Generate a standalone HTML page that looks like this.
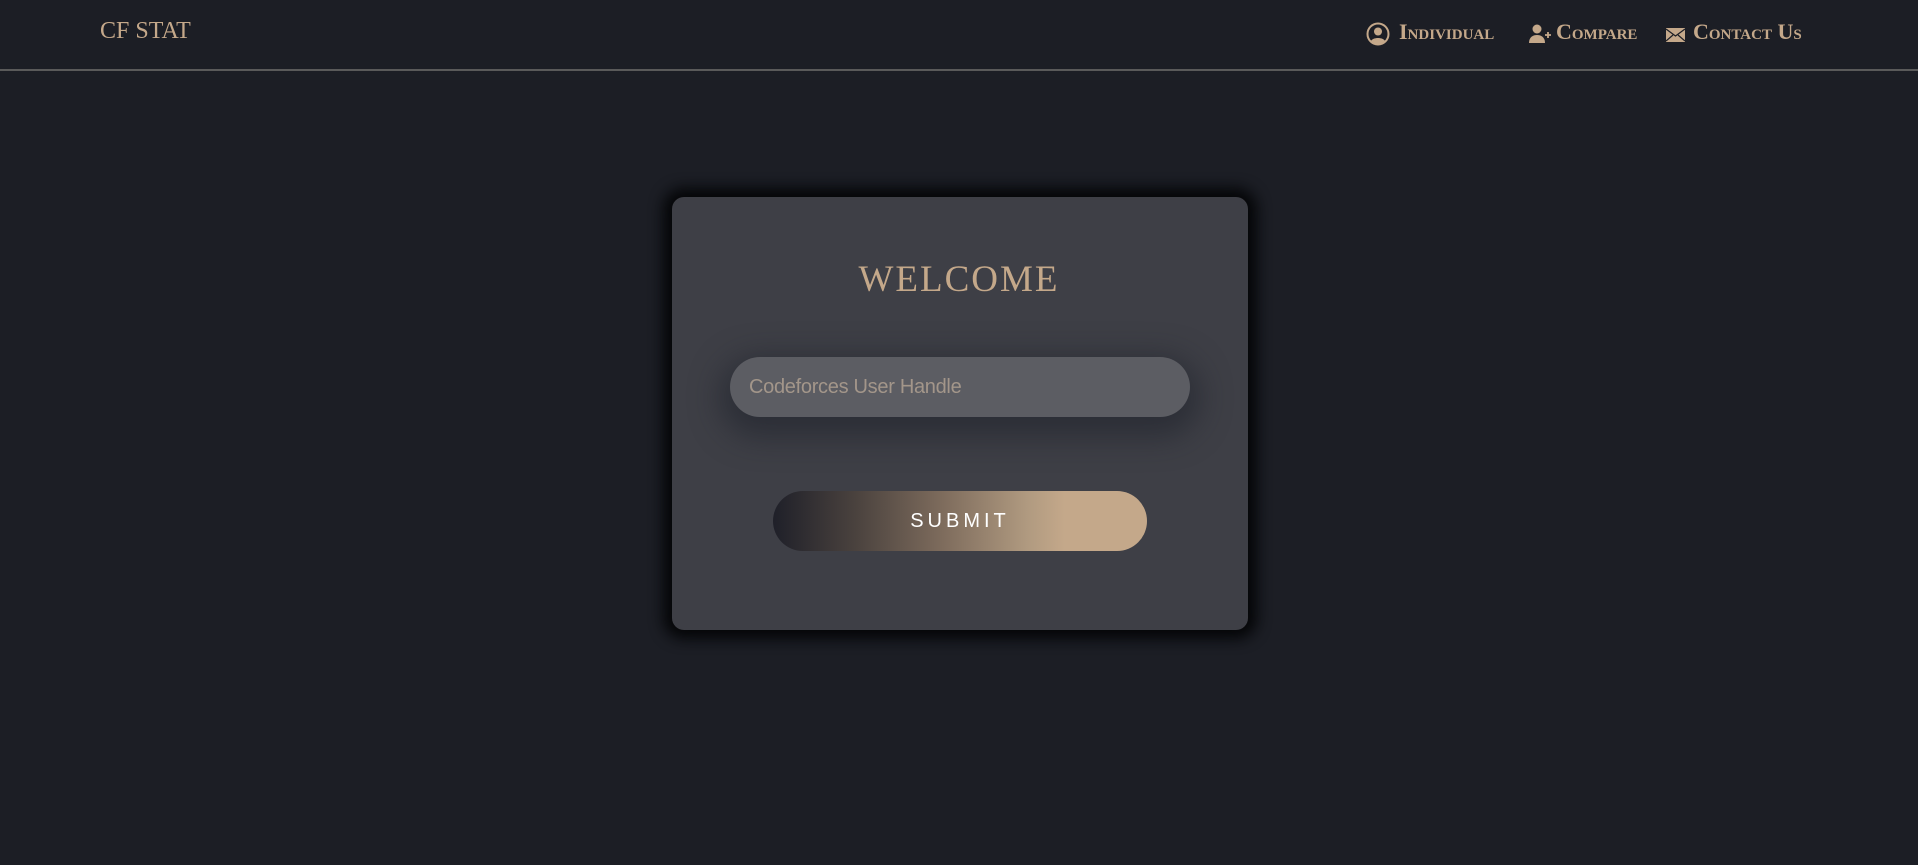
<!DOCTYPE html>
<html><head><style>
html,body{margin:0;padding:0;width:1918px;height:865px;background:#1c1e25;overflow:hidden;font-family:"Liberation Serif",serif}
.nav{position:absolute;left:0;top:0;width:1918px;height:69px;border-bottom:2px solid #5a5a5a}
.logo{position:absolute;left:100px;top:18px;font-size:24px;color:#c4a88a;letter-spacing:0px}
.item{position:absolute;top:19px;font-size:22px;color:#c4a88a;font-variant:small-caps;white-space:nowrap;font-weight:bold}
.item svg{position:absolute}
.card{position:absolute;left:672px;top:197px;width:576px;height:433px;background:#3e3f46;border-radius:12px;box-shadow:0 0 14px 9px #050608}
.welcome{position:absolute;left:0;right:0;top:258px;text-align:center;font-size:37px;letter-spacing:2px;color:#c4a88a}
.input{position:absolute;left:730px;top:357px;width:460px;height:60px;border-radius:30px;background:#5c5d63;box-shadow:0 10px 30px 10px rgba(30,32,42,.55)}
.input span{position:absolute;left:19px;top:19px;font-family:"Liberation Sans",sans-serif;font-size:20px;color:#a3968a;letter-spacing:-0.3px}
.btn{position:absolute;left:773px;top:491px;width:374px;height:60px;border-radius:30px;background:linear-gradient(90deg,#1f2029 0%,#4a423e 22%,#7d6b5c 45%,#b09a80 68%,#c4a88a 78%,#c4a88a 100%);color:#fff;text-align:center;line-height:60px;font-family:"Liberation Sans",sans-serif;font-size:20px;letter-spacing:4px}
</style></head><body>
<div class="nav">
<div class="logo">CF STAT</div>
<div class="item" style="left:1366px"><svg width="24" height="24" viewBox="0 0 24 24" style="left:0;top:3px"><circle cx="12" cy="12" r="10.5" fill="none" stroke="#c4a88a" stroke-width="2"/><circle cx="12" cy="9.5" r="4" fill="#c4a88a"/><path d="M5 19c2-4 12-4 14 0c-2 2-5 3-7 3s-5-1-7-3z" fill="#c4a88a"/></svg><span style="margin-left:33px">Individual</span></div>
<div class="item" style="left:1529px"><svg width="24" height="20" viewBox="0 0 24 20" style="left:0;top:5px"><circle cx="8" cy="5" r="4.5" fill="#c4a88a"/><path d="M0 19c0-6 4-8 8-8s8 2 8 8z" fill="#c4a88a"/><path d="M19 8v6M16 11h6" stroke="#c4a88a" stroke-width="1.8"/></svg><span style="margin-left:27px">Compare</span></div>
<div class="item" style="left:1666px"><svg width="19" height="14" viewBox="0 0 19 14" style="left:0;top:9px"><rect width="19" height="14" fill="#c4a88a"/><path d="M0 1l9.5 7L19 1M0 13l7-6M19 13l-7-6" stroke="#1c1e25" stroke-width="1.2" fill="none"/></svg><span style="margin-left:27px">Contact Us</span></div>
</div>
<div class="card"></div>
<div class="welcome">WELCOME</div>
<div class="input"><span>Codeforces User Handle</span></div>
<div class="btn">SUBMIT</div>
</body></html>
